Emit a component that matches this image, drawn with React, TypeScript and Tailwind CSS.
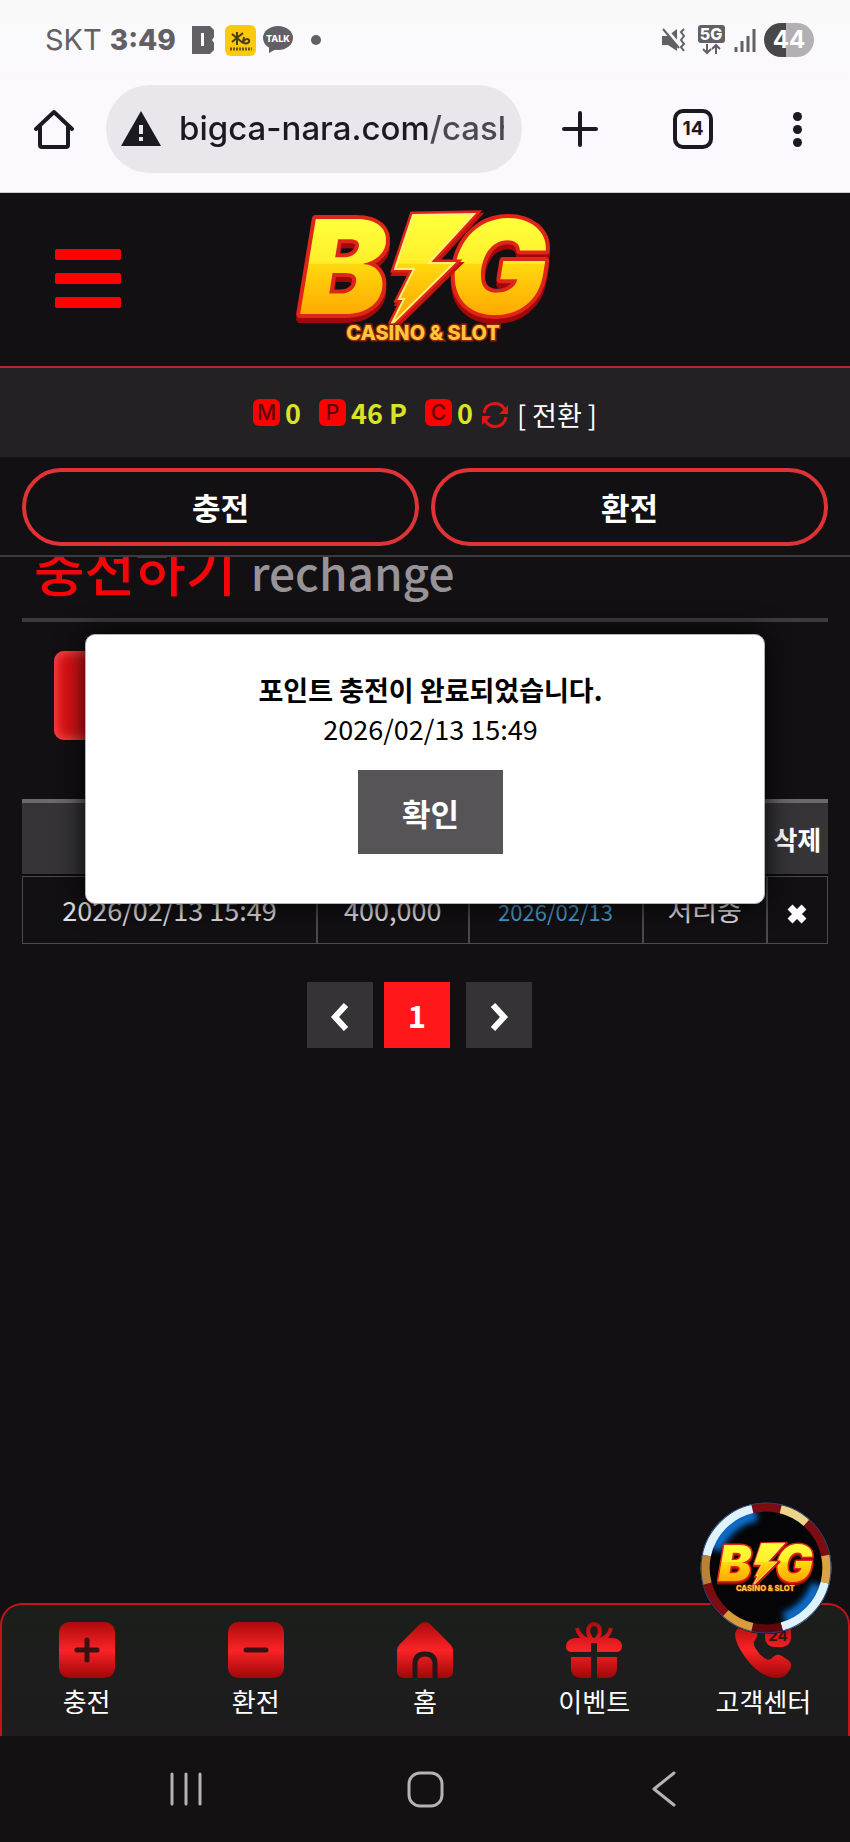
import { useId, useState } from 'react'
import type { ReactNode } from 'react'

const NAV = [
  { label: '충전', icon: <DepositIcon /> },
  { label: '환전', icon: <WithdrawIcon /> },
  { label: '홈', icon: <HomeIcon /> },
  { label: '이벤트', icon: <GiftIcon /> },
  { label: '고객센터', icon: <PhoneIcon /> },
]

const ROWS = [
  { requested: '2026/02/13 15:49', amount: '400,000', processed: '2026/02/13', status: '처리중' },
]

export default function App() {
  const [open, setOpen] = useState(true)

  return (
    <div className="min-h-screen flex flex-col bg-[#121013] text-white font-['Noto_Sans_CJK_KR',sans-serif]">
      <StatusBar />
      <BrowserBar />

      <header className="relative z-10 bg-[#121013]">
        <div className="grid grid-cols-[1fr_auto_1fr] items-center px-[55px] pt-[18px] pb-[21px] border-b-2 border-[#b3282b]">
          <button aria-label="메뉴" className="w-[66px] flex flex-col gap-[13px]">
            <span className="h-[11px] w-full rounded-xs bg-[#ff0000]" />
            <span className="h-[11px] w-full rounded-xs bg-[#ff0000]" />
            <span className="h-[11px] w-full rounded-xs bg-[#ff0000]" />
          </button>
          <BigLogo className="w-64 overflow-visible" />
        </div>

        <div className="h-[89px] bg-[#232124] flex items-center justify-center text-[27px] leading-[40px]">
          <Balance badge="M" value="0" />
          <Balance badge="P" value="46 P" />
          <Balance badge="C" value="0" last />
          <button aria-label="새로고침" className="ml-2">
            <RefreshIcon />
          </button>
          <button className="ml-2 pt-1">[ 전환 ]</button>
        </div>

        <div className="flex gap-3 px-[22px] pt-[11px] pb-[9px] border-b-2 border-[#3c3a3d]">
          <PillButton>충전</PillButton>
          <PillButton>환전</PillButton>
        </div>
      </header>

      <main className="relative flex-1 overflow-hidden px-[22px]">
        <h1 className="-mt-5 px-3 pb-[17px] border-b-4 border-[#3e3b3f] text-[46px] leading-[60px] font-medium text-[#979398]">
          <span className="mr-1 text-[55px] text-[#f5050a]">충전하기</span> rechange
        </h1>

        <div className="mt-[29px] ml-8 h-[89px] w-64 rounded-[10px] bg-[#e01317] shadow-[inset_0_0_10px_3px_#f5484b]" />

        <table className="mt-[59px] w-full table-fixed border-separate border-spacing-0 text-center">
          <colgroup>
            <col className="w-[36.6%]" />
            <col className="w-[18.8%]" />
            <col className="w-[21.6%]" />
            <col />
            <col className="w-[7.6%]" />
          </colgroup>
          <thead>
            <tr className="h-[77px] text-[26px]">
              <HeadCell />
              <HeadCell />
              <HeadCell />
              <HeadCell />
              <HeadCell>삭제</HeadCell>
            </tr>
          </thead>
          <tbody>
            {ROWS.map(r => (
              <tr key={r.requested} className="h-[68px] text-[27px] text-[#e4e2e5]">
                <Cell>{r.requested}</Cell>
                <Cell>{r.amount}</Cell>
                <Cell>
                  <span className="text-[22px] text-[#4b9fd3]">{r.processed}</span>
                </Cell>
                <Cell>{r.status}</Cell>
                <Cell>
                  <button aria-label="삭제" className="block mx-auto pt-2">
                    <svg className="size-5" viewBox="0 0 20 20" stroke="#fff" strokeWidth="7">
                      <path d="M3 3l14 14M17 3L3 17" />
                    </svg>
                  </button>
                </Cell>
              </tr>
            ))}
          </tbody>
        </table>

        <nav aria-label="페이지" className="mt-[38px] pr-[11px] flex justify-center">
          <button aria-label="이전" className="size-[66px] mr-[11px] pt-1 bg-[#353336] flex items-center justify-center">
            <svg className="w-5 h-7" viewBox="0 0 20 28" fill="none" stroke="#fff" strokeWidth="6">
              <path d="M16 2L5 14l11 12" />
            </svg>
          </button>
          <button aria-current="page" className="size-[66px] bg-[#ff171a] text-[31px] font-bold">
            1
          </button>
          <button aria-label="다음" className="size-[66px] ml-4 pt-1 bg-[#353336] flex items-center justify-center">
            <svg className="w-5 h-7" viewBox="0 0 20 28" fill="none" stroke="#fff" strokeWidth="6">
              <path d="M4 2l11 12L4 26" />
            </svg>
          </button>
        </nav>

        {open && (
          <div
            role="dialog"
            aria-label="알림"
            className="absolute top-[77px] left-[10%] w-4/5 pt-[35px] pb-[49px] pl-[11px] rounded-[10px] border border-[#b5b3b6] bg-white text-black text-center text-[27px] leading-[39px] shadow-[0_0_28px_rgba(0,0,0,0.95)]"
          >
            <p className="font-bold">포인트 충전이 완료되었습니다.</p>
            <p>2026/02/13 15:49</p>
            <button
              onClick={() => setOpen(false)}
              className="mt-[22px] w-[145px] h-[84px] bg-[#575457] text-white text-[31px] font-bold"
            >
              확인
            </button>
          </div>
        )}
      </main>

      <footer className="relative">
        <a href="#casino" aria-label="BIG CASINO & SLOT" className="absolute right-[18px] bottom-[102px] z-10">
          <Chip />
        </a>
        <nav className="h-[133px] pt-[17px] grid grid-cols-5 rounded-t-[22px] border-2 border-b-0 border-[#c31417] bg-linear-to-b from-[#1b1e1b] to-[#1e1c1e]">
          {NAV.map(item => (
            <a key={item.label} href="#menu" className="flex flex-col items-center text-[26px] leading-[46px]">
              {item.icon}
              {item.label}
            </a>
          ))}
        </nav>
      </footer>

      <SystemNav />
    </div>
  )
}

function StatusBar() {
  return (
    <div className="h-20 pl-[45px] pr-9 bg-linear-to-b from-[#f9f9f9] to-[#faf8fd] flex items-center text-[#626064] font-['Inter',sans-serif]">
      <span className="text-[29px]">SKT</span>
      <span className="ml-2 text-[28px] font-extrabold">3:49</span>
      <svg className="ml-4 w-[22px] h-7" viewBox="0 0 22 28" fill="currentColor">
        <path fillRule="evenodd" d="M0 0h18l4 4v7l-2 3 2 3v7l-4 4H0zM9 7v13h3V7z" />
      </svg>
      <svg className="ml-[11px] size-[31px]" viewBox="0 0 31 31">
        <rect width="31" height="31" rx="6" fill="#fbca0b" />
        <path
          d="M12 7v13M7 9l11 9M18 8L7 17M19 12l-1 5c2 3 7 1 6-2-1-2-4-1-6 2"
          fill="none"
          stroke="#4a3c16"
          strokeWidth="2"
        />
        <path d="M5 24h22" stroke="#6d5413" strokeWidth="3" strokeDasharray="2 1" />
      </svg>
      <svg className="ml-[7px] w-[30px] h-7" viewBox="0 0 30 28">
        <ellipse cx="15" cy="12" rx="15" ry="12" fill="#626064" />
        <path d="M6 19v8l9-5z" fill="#626064" />
        <text x="15" y="16" textAnchor="middle" fontSize="9" fontWeight="800" fill="#fff">
          TALK
        </text>
      </svg>
      <span className="ml-[18px] size-[10px] rounded-full bg-[#626064]" />

      <svg className="ml-auto w-6 h-6" viewBox="0 0 24 24" fill="currentColor">
        <path d="M0 8h6l9-7v22l-9-6H0z" />
        <path d="M2 0l16 18" stroke="#f9f8fb" strokeWidth="4" />
        <path d="M1 1l16 19" stroke="currentColor" strokeWidth="2" />
        <path d="M22 1l-3 3 3 4-3 4 3 4-3 3 3 4" fill="none" stroke="currentColor" strokeWidth="2" />
      </svg>
      <svg className="ml-3 w-[27px] h-[30px]" viewBox="0 0 27 30">
        <rect width="27" height="18" rx="3" fill="#626064" />
        <text x="13" y="15" textAnchor="middle" fontSize="16" fontWeight="800" fill="#fff">
          5G
        </text>
        <path
          d="M9 19v9M5 24l4 4 4-4M18 29v-9M14 24l4-4 4 4"
          fill="none"
          stroke="#626064"
          strokeWidth="2"
        />
      </svg>
      <svg className="ml-[9px] w-[22px] h-[23px]" viewBox="0 0 22 23" stroke="currentColor" strokeWidth="3">
        <path d="M2 18v5M8 12v11M14 7v16M20 0v23" />
      </svg>
      <span className="ml-2 w-[50px] h-[34px] rounded-full bg-linear-to-r from-[#49474a] from-43% to-[#b3b0b5] to-43% text-white text-[24px] font-bold flex items-center justify-center">
        44
      </span>
    </div>
  )
}

function BrowserBar() {
  return (
    <div className="h-[113px] pl-[34px] pr-[44px] pt-[5px] pb-[19px] flex items-center bg-[#fbf8fe] text-[#1b1a20] border-b border-[#cfccd3]">
      <button aria-label="홈페이지">
        <svg className="size-10" viewBox="0 0 40 40" fill="none" stroke="currentColor" strokeWidth="4" strokeLinecap="round" strokeLinejoin="round">
          <path d="M2 20L20 3l18 17M6 17v19q0 2 2 2h24q2 0 2-2V17" />
        </svg>
      </button>
      <div className="ml-8 h-[88px] w-[416px] pl-[15px] pr-[18px] rounded-full bg-[#eae7ec] flex items-center gap-[18px]">
        <svg className="w-10 h-9 shrink-0" viewBox="0 0 40 36">
          <path d="M20 0l20 35H0z" fill="currentColor" />
          <path d="M20 14v9M20 26v4" stroke="#eae7ec" strokeWidth="4" />
        </svg>
        <input
          aria-label="주소"
          defaultValue="bigca-nara.com/cash"
          className="min-w-0 flex-1 h-12 bg-linear-to-r from-[#1b1a20] from-77% to-[#4b4950] to-77% bg-clip-text text-transparent text-[33px] font-medium outline-none font-['Inter',sans-serif]"
        />
      </div>
      <div className="ml-10 flex-1 flex items-center justify-between">
        <button aria-label="새 탭">
          <svg className="size-9" viewBox="0 0 36 36" stroke="currentColor" strokeWidth="4" strokeLinecap="round">
            <path d="M18 2v32M2 18h32" />
          </svg>
        </button>
        <button
          aria-label="탭"
          className="size-10 rounded-[10px] border-4 border-[#1b1a20] text-[19px] leading-[32px] font-bold font-['Inter',sans-serif]"
        >
          14
        </button>
        <button aria-label="더보기" className="w-[18px] flex flex-col items-center gap-1">
          <span className="size-[9px] rounded-full bg-[#1b1a20]" />
          <span className="size-[9px] rounded-full bg-[#1b1a20]" />
          <span className="size-[9px] rounded-full bg-[#1b1a20]" />
        </button>
      </div>
    </div>
  )
}

function Balance({ badge, value, last }: { badge: string; value: string; last?: boolean }) {
  return (
    <div className={`flex items-center ${last ? '' : 'mr-[18px]'}`}>
      <span className="size-[27px] rounded-md bg-[#ff0000] text-[#5d080a] text-[21px] leading-[27px] text-center font-medium font-['Inter',sans-serif]">
        {badge}
      </span>
      <span className="ml-[5px] font-bold text-[#dbe326]">{value}</span>
    </div>
  )
}

function PillButton({ children }: { children: ReactNode }) {
  return (
    <button className="flex-1 h-[78px] rounded-full border-4 border-[#e03336] text-[31px] font-bold">
      {children}
    </button>
  )
}

function HeadCell({ children }: { children?: ReactNode }) {
  return (
    <th className="border-t-4 border-t-[#6b696c] border-b-2 border-b-[#0c0a0d] bg-[#363437] font-bold whitespace-nowrap">
      {children}
    </th>
  )
}

function Cell({ children }: { children: ReactNode }) {
  return <td className="border border-[#4c4a4d] whitespace-nowrap">{children}</td>
}

function RefreshIcon() {
  return (
    <svg className="size-7 mt-1" viewBox="0 0 28 28" fill="none" stroke="#e01518" strokeWidth="3">
      <path d="M3 12C5 1 19-1 24 9M25 16C23 27 9 29 4 19" />
      <path d="M27 4v9h-9zM1 24v-9h9z" fill="#e01518" stroke="none" />
    </svg>
  )
}

function BigLogo({ className }: { className: string }) {
  const id = useId()
  const gold = `url(#${id})`
  const bolt = 'M116 4L177 3L132 52L157 52L94 114L107 88L102 88L117 58L98 58Z'

  return (
    <svg className={className} viewBox="0 0 256 134">
      <defs>
        <linearGradient id={id} gradientUnits="userSpaceOnUse" x1="0" y1="8" x2="0" y2="104">
          <stop offset="0" stopColor="#ffff3c" />
          <stop offset="0.46" stopColor="#ffee2a" />
          <stop offset="0.47" stopColor="#ffd90f" />
          <stop offset="1" stopColor="#ffa800" />
        </linearGradient>
      </defs>
      <g
        className="drop-shadow-[0_5px_0_#a30808]"
        fontFamily="Inter, sans-serif"
        fontStyle="italic"
        fontWeight="900"
        fontSize="130"
        fill={gold}
        stroke="#df2419"
        strokeWidth="8"
        strokeLinejoin="round"
        paintOrder="stroke"
      >
        <text x="3" y="103">B</text>
        <text x="152" y="103">G</text>
      </g>
      <path d={bolt} fill="#c5120f" stroke="#c5120f" strokeWidth="8" transform="translate(1 3)" />
      <path d={bolt} fill={gold} stroke="#df2419" strokeWidth="7" />
      <path d={bolt} fill={gold} stroke="#fff07a" strokeWidth="2" />
      <text
        x="126"
        y="129"
        textAnchor="middle"
        fontFamily="Inter, sans-serif"
        fontWeight="800"
        fontSize="20"
        fill="#ffc637"
        stroke="#8c2206"
        strokeWidth="3"
        paintOrder="stroke"
      >
        CASINO &amp; SLOT
      </text>
    </svg>
  )
}

// angles are in degrees, clockwise from the top
const RING = [
  { from: -13, to: 14, color: '#7d0b12' },
  { from: 14, to: 42, color: '#ecd488' },
  { from: 42, to: 78, color: '#7d0b12' },
  { from: 78, to: 104, color: '#d9a441' },
  { from: 104, to: 165, color: '#dff3ff' },
  { from: 165, to: 193, color: '#5c080c' },
  { from: 193, to: 222, color: '#d99b3c' },
  { from: 222, to: 255, color: '#7d0b12' },
  { from: 255, to: 282, color: '#b9803a' },
  { from: 282, to: 347, color: '#dff3ff' },
]

function arc(from: number, to: number, r: number) {
  const point = (deg: number) => {
    const a = ((deg - 90) * Math.PI) / 180
    return `${65 + r * Math.cos(a)} ${65 + r * Math.sin(a)}`
  }
  return `M${point(from)}A${r} ${r} 0 0 1 ${point(to)}`
}

function Chip() {
  const id = useId()
  return (
    <div className="size-[132px] rounded-full bg-[#050507] flex items-center justify-center relative">
      <svg className="absolute inset-0 size-full" viewBox="0 0 130 130" fill="none">
        <defs>
          <filter id={id} x="-30%" y="-30%" width="160%" height="160%">
            <feGaussianBlur stdDeviation="3" />
          </filter>
        </defs>
        <g stroke="#0d6fd0" strokeWidth="12" filter={`url(#${id})`}>
          <path d={arc(108, 160, 53)} />
          <path d={arc(290, 350, 53)} />
        </g>
        {RING.map(s => (
          <path key={s.from} d={arc(s.from, s.to, 60)} stroke={s.color} strokeWidth="9" />
        ))}
        <circle cx="65" cy="65" r="64" stroke="#27406e" strokeWidth="1" />
      </svg>
      <BigLogo className="relative w-[98px] overflow-visible" />
    </div>
  )
}

function RedIcon({ children }: { children: (fill: string) => ReactNode }) {
  const id = useId()
  return (
    <svg className="size-14" viewBox="0 0 56 56">
      <defs>
        <linearGradient id={id} gradientUnits="userSpaceOnUse" x1="0" y1="0" x2="0" y2="56">
          <stop offset="0" stopColor="#ab0a0c" />
          <stop offset="0.5" stopColor="#fb2326" />
          <stop offset="1" stopColor="#a00609" />
        </linearGradient>
      </defs>
      {children(`url(#${id})`)}
    </svg>
  )
}

function DepositIcon() {
  return (
    <RedIcon>
      {fill => (
        <>
          <rect width="56" height="56" rx="10" fill={fill} />
          <path d="M28 18v20M18 28h20" stroke="#3a1012" strokeWidth="5" strokeLinecap="round" />
        </>
      )}
    </RedIcon>
  )
}

function WithdrawIcon() {
  return (
    <RedIcon>
      {fill => (
        <>
          <rect width="56" height="56" rx="10" fill={fill} />
          <path d="M18 28h20" stroke="#3a1012" strokeWidth="5" strokeLinecap="round" />
        </>
      )}
    </RedIcon>
  )
}

function HomeIcon() {
  return (
    <RedIcon>
      {fill => (
        <>
          <path d="M23 2q5-4 10 0l20 20q3 3 3 6v21q0 7-7 7H7q-7 0-7-7V28q0-3 3-6z" fill={fill} />
          <path d="M18 57V42q0-10 10-10t10 10v15" fill="none" stroke="#251617" strokeWidth="5" />
        </>
      )}
    </RedIcon>
  )
}

function GiftIcon() {
  return (
    <RedIcon>
      {fill => (
        <>
          <path
            d="M27 18C19 12 22 2 28 2s9 10 1 16M22 18q-9-3-11-12M34 18q9-3 11-12"
            fill="none"
            stroke={fill}
            strokeWidth="4"
          />
          <path d="M8 16h40q8 2 8 8 0 6-6 6H31v-9h-6v9H6q-6 0-6-6 0-6 8-8z" fill={fill} />
          <path d="M5 35h20v21h-9Q5 56 5 46zM31 35h20v11q0 10-11 10h-9z" fill={fill} />
        </>
      )}
    </RedIcon>
  )
}

function PhoneIcon() {
  return (
    <RedIcon>
      {fill => (
        <>
          <path
            d="M8 3q7-4 12 3 5 7 0 12-3 3 1 9 4 7 10 10 4 2 7-2 4-4 9-1l6 4q6 4 1 11-5 8-15 7Q24 54 10 35 0 21 0 12 1 6 8 3z"
            fill={fill}
          />
          <rect x="30" y="0" width="26" height="25" rx="9" fill={fill} />
          <text x="43" y="19" textAnchor="middle" fontFamily="Inter, sans-serif" fontSize="15" fontWeight="700" fill="#3a1012">
            24
          </text>
        </>
      )}
    </RedIcon>
  )
}

function SystemNav() {
  return (
    <div className="h-[106px] px-[102px] grid grid-cols-[168px_1fr_168px] items-center justify-items-center bg-[#141113] [&_svg]:size-10">
      <button aria-label="최근 앱">
        <svg viewBox="0 0 40 40" stroke="#b5b3b5" strokeWidth="3" strokeLinecap="round">
          <path d="M6 5v30M20 5v30M34 5v30" />
        </svg>
      </button>
      <button aria-label="홈 화면">
        <svg viewBox="0 0 40 40" fill="none" stroke="#b5b3b5" strokeWidth="3">
          <rect x="4" y="4" width="33" height="33" rx="11" />
        </svg>
      </button>
      <button aria-label="뒤로">
        <svg viewBox="0 0 40 40" fill="none" stroke="#b5b3b5" strokeWidth="3" strokeLinecap="round" strokeLinejoin="round">
          <path d="M30 4L10 20l20 16" />
        </svg>
      </button>
    </div>
  )
}
